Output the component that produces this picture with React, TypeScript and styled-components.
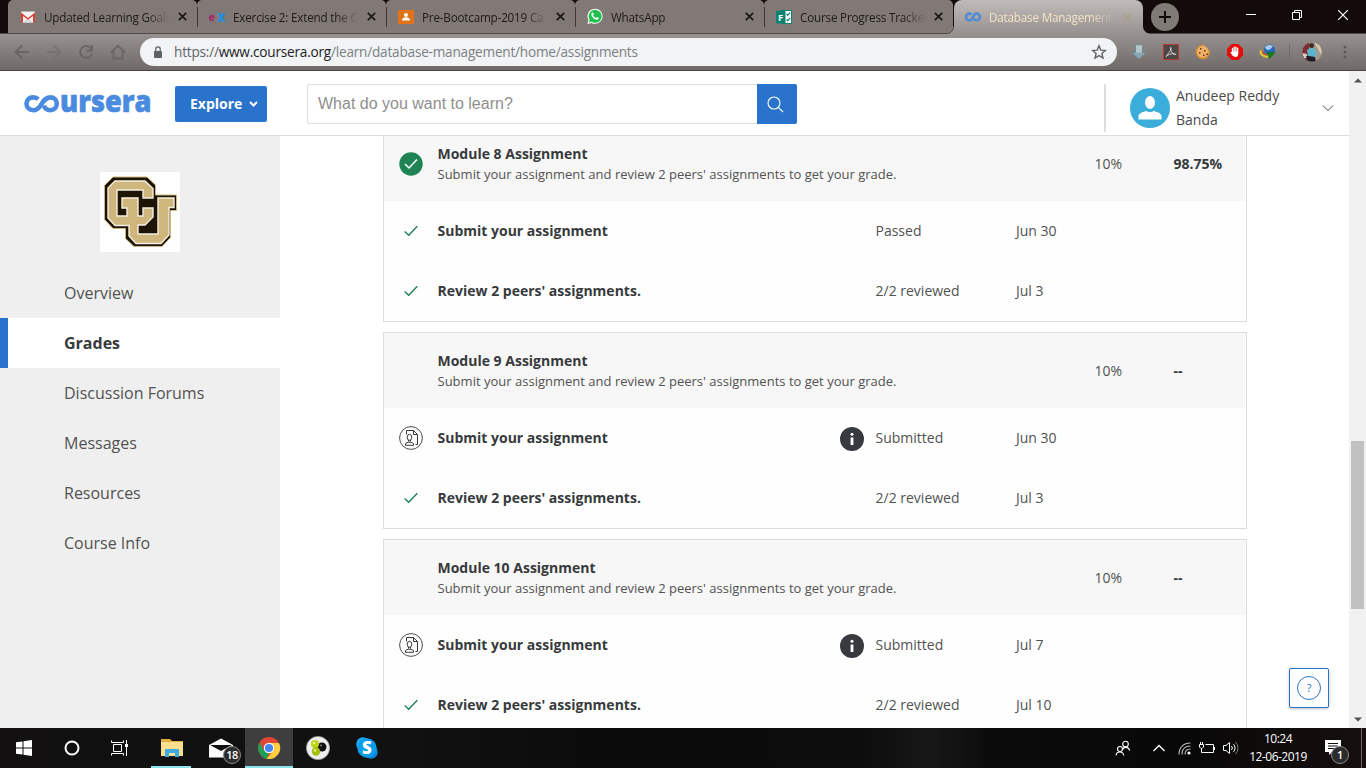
import React from 'react';
import styled, { createGlobalStyle, css } from 'styled-components';

const GlobalStyle = createGlobalStyle`
  * { box-sizing: border-box; }
  html, body { margin: 0; padding: 0; }
  body {
    width: 1366px;
    height: 768px;
    overflow: hidden;
    background: #fff;
    font-family: "Open Sans", "Noto Sans", sans-serif;
    color: #373a3c;
  }
  svg { display: block; flex: none; }
`;

const Screen = styled.div`
  width: 1366px;
  height: 768px;
  display: flex;
  flex-direction: column;
  overflow: hidden;
`;

/* ---------- browser window ---------- */

const TabStrip = styled.div`
  height: 33px;
  flex: none;
  display: flex;
  padding-left: 8px;
  background: #130b0a;
`;

const Tab = styled.div<{ $active?: boolean }>`
  position: relative;
  width: 189px;
  height: 33px;
  flex: none;
  display: flex;
  align-items: center;
  padding: 0 10px 0 12px;
  border-radius: 5px 5px 0 0;
  background: #807975;
  color: #1f1a18;
  &:not(:first-child)::before {
    content: '';
    position: absolute;
    left: 0;
    top: 7px;
    width: 1px;
    height: 20px;
    background: #3f3836;
  }
  ${(p) =>
    p.$active &&
    css`
      height: 34px;
      z-index: 1;
      padding: 0 11px;
      border-radius: 8px 8px 0 0;
      background: linear-gradient(#c0bbb9, #979190);
      color: #f3e3c6;
      margin-left: 1px;
      &:not(:first-child)::before {
        left: -8px;
        top: 26px;
        width: 8px;
        height: 8px;
        background: radial-gradient(circle at 0 0, transparent 7px, #4a4240 7.5px, #979190 8.5px);
      }
      &::after {
        content: '';
        position: absolute;
        right: -8px;
        top: 26px;
        width: 8px;
        height: 8px;
        background: radial-gradient(circle at 8px 0, transparent 7.5px, #979190 8.5px);
      }
    `}
`;

const TabTitle = styled.span`
  width: 126px;
  margin-left: 8px;
  font-size: 11.7px;
  line-height: 16px;
  letter-spacing: -0.2px;
  white-space: nowrap;
  -webkit-mask-image: linear-gradient(90deg, #000 102px, transparent 126px);
  mask-image: linear-gradient(90deg, #000 102px, transparent 126px);
`;

const TabClose = styled.svg`
  margin-left: auto;
`;

const NewTab = styled.div`
  width: 28px;
  height: 28px;
  margin: 3px 0 0 8px;
  border-radius: 50%;
  background: #807a77;
  display: grid;
  place-items: center;
`;

const WindowButtons = styled.div`
  margin-left: auto;
  display: flex;
`;

const WindowButton = styled.div`
  width: 46px;
  height: 29px;
  display: grid;
  place-items: center;
`;

const Toolbar = styled.div`
  height: 38px;
  flex: none;
  display: flex;
  align-items: center;
  padding: 0 13px 0 14px;
  background: linear-gradient(#979190, #6f6a67);
  border-top: 1px solid #4f4846;
  border-bottom: 1px solid #4a4442;
`;

const NavButtons = styled.div`
  width: 126px;
  display: flex;
  gap: 16px;
`;

const Omnibox = styled.div`
  width: 977px;
  height: 28px;
  padding: 0 10px 0 13px;
  display: flex;
  align-items: center;
  border-radius: 14px;
  background: #f1f3f4;
  font-size: 13.6px;
`;

const Url = styled.span`
  flex: 1;
  margin-left: 11px;
  color: #7b8086;
  line-height: 20px;
  letter-spacing: -0.21px;
  white-space: nowrap;
`;
const UrlHost = styled.span`
  color: #202124;
`;
const UrlScheme = styled.span`
  color: #5f6368;
`;

const Extensions = styled.div`
  display: flex;
  align-items: center;
  gap: 16px;
  margin-left: 14px;
`;

const ToolbarRule = styled.div`
  width: 1px;
  height: 16px;
  margin: 0 12px 0 13px;
  background: #716b69;
`;

/* ---------- page ---------- */

const Page = styled.div`
  flex: 1;
  min-height: 0;
  display: flex;
`;

const Document = styled.div`
  width: 1349px;
  display: flex;
  flex-direction: column;
  background: #fff;
  position: relative;
`;

const Scrollbar = styled.div`
  width: 17px;
  background: #f1f1f1;
  display: flex;
  flex-direction: column;
  align-items: center;
  padding: 7px 0 6px;
`;

const ScrollThumb = styled.div`
  width: 13px;
  height: 168px;
  margin: 358px 0 auto;
  background: #c1c1c1;
`;

const Header = styled.header`
  height: 65px;
  flex: none;
  display: flex;
  align-items: center;
  border-bottom: 1px solid #ddd;
  padding-left: 23px;
`;

const Explore = styled.button`
  width: 92px;
  height: 36px;
  margin: 2px 0 0 22px;
  border: 0;
  padding: 0 9px 0 15px;
  display: flex;
  align-items: center;
  justify-content: space-between;
  border-radius: 2px;
  background: #2a73cc;
  color: #fff;
  font: 700 14px/20px "Open Sans", sans-serif;
`;

const Search = styled.div`
  display: flex;
  width: 490px;
  height: 40px;
  margin: 2px 0 0 40px;
`;

const SearchField = styled.div`
  flex: 1;
  padding-left: 10px;
  border: 1px solid #ddd;
  border-right: 0;
  border-radius: 2px 0 0 2px;
  color: #8f8f8f;
  font: 16px/37px "Liberation Sans", sans-serif;
`;

const SearchButton = styled.div`
  width: 40px;
  display: grid;
  place-items: center;
  padding-right: 4px;
  border-radius: 0 2px 2px 0;
  background: #2a73cc;
`;

const Account = styled.div`
  height: 48px;
  margin: 9px 0 0 auto;
  width: 245px;
  padding-left: 24px;
  border-left: 2px solid #ddd;
  display: flex;
  align-items: center;
`;

const AccountName = styled.div`
  width: 120px;
  margin-left: 6px;
  font-size: 14px;
  line-height: 24px;
  color: #4b4b4b;
`;

const Main = styled.div`
  flex: 1;
  min-height: 0;
  display: flex;
`;

const Sidebar = styled.aside`
  width: 280px;
  background: #efefef;
  padding-top: 36px;
`;

const CourseLogo = styled.div`
  width: 80px;
  height: 80px;
  margin: 0 0 16px 100px;
  background: #fff;
`;

const NavItem = styled.a<{ $active?: boolean }>`
  display: block;
  height: 50px;
  padding-left: 56px;
  border-left: 8px solid ${(p) => (p.$active ? '#2a73cc' : 'transparent')};
  background: ${(p) => (p.$active ? '#fff' : 'transparent')};
  color: ${(p) => (p.$active ? '#373a3c' : '#525252')};
  font-size: 16px;
  font-weight: ${(p) => (p.$active ? 700 : 400)};
  line-height: 50px;
`;

const Content = styled.main`
  flex: 1;
  overflow: hidden;
  padding-left: 103px;
`;

const CardList = styled.div`
  width: 864px;
  margin-top: -11px;
  display: flex;
  flex-direction: column;
  gap: 10px;
`;

const Card = styled.section`
  border: 1px solid #ddd;
  background: #fefefe;
`;

const CardRow = styled.div<{ $head?: boolean }>`
  display: grid;
  grid-template-columns: 53.5px 402px 36px 140.5px 78.5px 79px 1fr;
  align-items: center;
  height: ${(p) => (p.$head ? 75 : 60)}px;
  background: ${(p) => (p.$head ? '#f7f7f7' : 'transparent')};
  font-size: 14px;
  line-height: 20px;
  color: #525252;
`;

const IconCell = styled.div`
  display: grid;
  place-items: center;
`;

const InfoCell = styled.div`
  padding-top: 2px;
`;

const Heading = styled.div`
  grid-column: 2 / span 4;
`;

const Strong = styled.div`
  font-weight: 700;
  color: #373a3c;
`;

const Description = styled.div`
  font-size: 13px;
  letter-spacing: 0.01px;
`;

const HelpButton = styled.div`
  position: absolute;
  right: 20px;
  bottom: 20px;
  width: 40px;
  height: 40px;
  display: grid;
  place-items: center;
  border: 1px solid #2a73cc;
  border-radius: 2px;
  background: #fff;
  box-shadow: 0 1px 3px rgba(0, 0, 0, 0.25);
`;

const HelpRing = styled.div`
  width: 24px;
  height: 24px;
  border: 1px solid #2a73cc;
  border-radius: 50%;
  color: #2a73cc;
  text-align: center;
  font-size: 11px;
  line-height: 22px;
`;

/* ---------- taskbar ---------- */

const Taskbar = styled.footer`
  height: 40px;
  flex: none;
  display: flex;
  background: linear-gradient(90deg, #121010 0, #111 400px, #0b0b0b 600px, #0c0c0c 860px, #171817 930px, #0b0b0b 990px, #080808 1180px, #160f0e 1366px);
  color: #fff;
`;

const TaskItem = styled.div<{ $system?: boolean; $open?: boolean; $current?: boolean }>`
  position: relative;
  width: ${(p) => (p.$current || p.$system ? 48 : 49)}px;
  height: 40px;
  margin-left: ${(p) => (p.$open ? 3 : 0)}px;
  display: grid;
  place-items: center;
  background: ${(p) => (p.$current ? '#3f3e3e' : 'transparent')};
  ${(p) =>
    (p.$open || p.$current) &&
    css`
      &::after {
        content: '';
        position: absolute;
        bottom: 0;
        left: ${p.$current ? 0 : 4}px;
        right: ${p.$current ? 0 : 5}px;
        height: 2px;
        background: #8ce3ea;
      }
    `}
`;

const Tray = styled.div`
  margin-left: auto;
  display: flex;
  align-items: center;
`;

const TrayIcon = styled.div<{ $after: number }>`
  margin-right: ${(p) => p.$after}px;
`;

const Clock = styled.div`
  width: 76px;
  text-align: center;
  font-size: 12px;
  line-height: 18px;
  letter-spacing: -0.5px;
`;

const Notifications = styled.div`
  position: relative;
  width: 45px;
  height: 40px;
  padding: 12px 0 0 9px;
`;

const Badge = styled.span<{ $x: number; $y: number }>`
  position: absolute;
  left: ${(p) => p.$x}px;
  top: ${(p) => p.$y}px;
  width: 18px;
  height: 18px;
  border-radius: 50%;
  border: 1px solid #8b8b8b;
  background: #2b2b2b;
  color: #fff;
  font-size: 11px;
  font-weight: 600;
  line-height: 15px;
  text-align: center;
  letter-spacing: -0.5px;
`;

const DesktopEdge = styled.div`
  width: 5px;
  height: 40px;
  border-left: 1px solid #6d6867;
`;

/* ---------- drawings ---------- */

const Gmail = () => (
  <svg width="16" height="16" viewBox="0 0 16 16">
    <rect x="1" y="2.5" width="14" height="11" rx="1" fill="#f2f2f2" />
    <path d="M3 13.5L8 8.5L13 13.5" fill="#dcdcdc" />
    <path d="M1 13.5V3.5L8 9L15 3.5V13.5H13V7L8 10.8L3 7V13.5Z" fill="#d8433a" />
  </svg>
);

const EdX = () => (
  <svg width="16" height="16" viewBox="0 0 16 16">
    <text x="-0.5" y="12" fontSize="10.500" fontWeight="800" fontFamily="Open Sans" fill="#a8286c">e</text>
    <text x="8" y="12.5" fontSize="12" fontWeight="800" fontFamily="Open Sans" fill="#1e8fe0">X</text>
  </svg>
);

const Classroom = () => (
  <svg width="16" height="16" viewBox="0 0 16 16">
    <rect y="1" width="16" height="14" rx="1" fill="#e8711c" />
    <rect x="2" y="3" width="12" height="10" fill="#e07414" />
    <circle cx="8" cy="6" r="2" fill="#fff" />
    <path d="M4 11.5C4 9 6 8.6 8 8.6S12 9 12 11.5Z" fill="#fff" />
  </svg>
);

const WhatsApp = () => (
  <svg width="16" height="17" viewBox="0 0 17 17">
    <path d="M.5 16.5L1.6 12.3A8 8 0 1 1 4.7 15.3Z" fill="#fff" />
    <path d="M2 15L2.8 12A6.9 6.9 0 1 1 5 14.2Z" fill="#1fc04c" />
    <path d="M5.3 4.6C6.3 4 6.7 4.3 7.2 5.9C7.3 6.4 6.4 6.9 6.6 7.2C7.3 8.6 8.4 9.5 9.6 10C10 10.1 10.4 9 10.9 9.1C12.6 9.9 12.7 10 12.2 11C11.4 12.5 9.3 12 7.6 10.8C5.6 9.4 3.6 6.7 5.3 4.6Z" fill="#fff" />
  </svg>
);

const Forms = () => (
  <svg width="16" height="16" viewBox="0 0 16 16">
    <rect x="8" y="1.5" width="7.5" height="13" fill="#fff" stroke="#0b8372" />
    <path d="M0 2L9.5 .5V15.5L0 14Z" fill="#0b8372" />
    <text x="2" y="11.5" fontSize="9.5" fontWeight="700" fontFamily="Open Sans" fill="#fff">F</text>
    <path d="M10.5 5L11.7 6.3L14 3.7M10.5 10.4L11.7 11.7L14 9" stroke="#0b8372" fill="none" strokeWidth="1.2" />
  </svg>
);

const CourseraMark = () => (
  <svg width="16" height="10" viewBox="0 0 16 10">
    <path d="M6.6 2.6C5.8 1.8 5.2 1.5 4.4 1.5A3.4 3.4 0 0 0 4.4 8.4C8 8.4 8 1.5 11.6 1.5A3.4 3.4 0 0 1 11.6 8.4C10 8.4 9.3 7.6 8.6 6.6" fill="none" stroke="#4a8bd8" strokeWidth="2.4" />
  </svg>
);

const LogoSvg = styled.svg`
  margin: -9px 0 -10px;
`;

const CourseraLogo = () => (
  <LogoSvg width="130" height="40" viewBox="0 -10 130 40" role="img" aria-label="coursera">
    <path d="M15.200 5.300C14 4 12.300 3.400 10.200 3.400C6.300 3.400 3.500 6 3.500 9.800S6.300 16.200 10.200 16.200C13.600 16.200 15.800 14.200 17.800 11.200C20.300 7 22.500 3.400 27.300 3.400C31.100 3.400 33.800 6 33.800 9.800S31.100 16.200 27.300 16.200C24 16.200 21.700 14.400 20.900 11.500" fill="none" stroke="#4a8be0" strokeWidth="4.600" />
    <text x="37" y="18.300" fontFamily="Open Sans" fontWeight="800" fontSize="29.500" fill="#4a8be0" stroke="#4a8be0" strokeWidth=".6" textLength="91.500" lengthAdjust="spacingAndGlyphs">ursera</text>
  </LogoSvg>
);

const CULogo = () => (
  <svg width="80" height="80" viewBox="0 0 80 80">
    <path d="M13 5H47L55.500 13V23H76.500V38.500H70.500V65.500L62 74.500H34L25.500 66.500V56.500H13L4.500 47.500V13.500Z" fill="#1d1404" stroke="#cdb77e" strokeWidth="1" />
    <path d="M15 9H45L53 16.500V26H43V18H17V44H27V36H22V26H38V44H43V36H53V45L45 53H38V62H58V36V26H74V35.500H69V63L61 71.500H36L29 64V53.500H15L8 46V16Z" fill="#cfb67c" stroke="#f4efe2" strokeWidth="1.400" />
  </svg>
);

const CheckMark = ({ color = '#1f8354' }: { color?: string }) => (
  <svg width="14" height="12" viewBox="0 0 14 12">
    <path d="M.7 6.500L4.700 10.300L13.300 1.200" fill="none" stroke={color} strokeWidth="1.400" />
  </svg>
);

const PassedIcon = () => (
  <svg width="24" height="24" viewBox="0 0 24 24">
    <circle cx="12" cy="12" r="11.700" fill="#1f8354" />
    <path d="M6 12L10 16L18 7.500" fill="none" stroke="#fff" strokeWidth="1.500" />
  </svg>
);

const PeerIcon = () => (
  <svg width="24" height="24" viewBox="0 0 24 24" fill="none" stroke="#373a3c">
    <circle cx="12" cy="12" r="11.400" strokeWidth="0.900" />
    <path d="M7.500 8.500V4.500H14.500L18.500 8.500V18.500H16.500M14.500 4.500V8.500H18.500" />
    <ellipse cx="10.500" cy="11.300" rx="2.300" ry="3" />
    <path d="M9.500 14V15.500M11.500 14V15.500M6.500 19.300V17.500L9 16.200H12L14.500 17.500V19.300Z" />
  </svg>
);

const InfoIcon = () => (
  <svg width="24" height="24" viewBox="0 0 24 24">
    <circle cx="12" cy="12" r="12" fill="#373a3f" />
    <circle cx="12" cy="7.300" r="1.500" fill="#fff" />
    <path d="M10.600 10.500H13.400V18H10.600Z" fill="#fff" />
  </svg>
);

const Cross = ({ color = '#1b1716' }: { color?: string }) => (
  <TabClose width="9" height="9" viewBox="0 0 9 9">
    <path d="M.8 .8L8.200 8.200M8.200 .8L.8 8.200" stroke={color} strokeWidth="1.700" />
  </TabClose>
);

const tabs = [
  { title: 'Updated Learning Goals', icon: <Gmail /> },
  { title: 'Exercise 2: Extend the C', icon: <EdX /> },
  { title: 'Pre-Bootcamp-2019 Ca', icon: <Classroom /> },
  { title: 'WhatsApp', icon: <WhatsApp /> },
  { title: 'Course Progress Tracker', icon: <Forms /> },
];

const modules = [
  { number: 8, passed: true, grade: '98.75%', submit: 'Passed', submitDate: 'Jun 30', reviewDate: 'Jul 3' },
  { number: 9, passed: false, grade: '--', submit: 'Submitted', submitDate: 'Jun 30', reviewDate: 'Jul 3' },
  { number: 10, passed: false, grade: '--', submit: 'Submitted', submitDate: 'Jul 7', reviewDate: 'Jul 10' },
];

const navigation = ['Overview', 'Grades', 'Discussion Forums', 'Messages', 'Resources', 'Course Info'];

const BrowserChrome = () => (
  <>
    <TabStrip>
      {tabs.map((t) => (
        <Tab key={t.title}>
          {t.icon}
          <TabTitle>{t.title}</TabTitle>
          <Cross />
        </Tab>
      ))}
      <Tab $active>
        <CourseraMark />
        <TabTitle>Database Management</TabTitle>
        <Cross color="#a99f87" />
      </Tab>
      <NewTab>
        <svg width="12" height="12" viewBox="0 0 12 12"><path d="M6 0V12M0 6H12" stroke="#110b0a" strokeWidth="2" /></svg>
      </NewTab>
      <WindowButtons>
        <WindowButton><svg width="10" height="10" viewBox="0 0 10 10"><path d="M0 4.500H10" stroke="#fff" /></svg></WindowButton>
        <WindowButton><svg width="10" height="10" viewBox="0 0 10 10" fill="none" stroke="#fff"><path d="M.5 2.500H7.500V9.500H.5ZM2.500 2.500V.5H9.500V7.500H7.500" /></svg></WindowButton>
        <WindowButton><svg width="10" height="10" viewBox="0 0 10 10"><path d="M0 0L10 10M10 0L0 10" stroke="#fff" strokeWidth="1.200" /></svg></WindowButton>
      </WindowButtons>
    </TabStrip>
    <Toolbar>
      <NavButtons>
        <svg width="16" height="16" viewBox="0 0 16 16" fill="none" stroke="#6a6563" strokeWidth="1.800"><path d="M15 8H2.500M8 1.500L1.500 8L8 14.500" /></svg>
        <svg width="16" height="16" viewBox="0 0 16 16" fill="none" stroke="#787371" strokeWidth="1.800"><path d="M1 8H13.500M8 1.500L14.500 8L8 14.500" /></svg>
        <svg width="16" height="16" viewBox="0 0 16 16" fill="none" stroke="#6a6563" strokeWidth="1.800"><path d="M13.500 5A6 6 0 1 0 14 9.500" /><path d="M14 1V6.500H8.500" /></svg>
        <svg width="16" height="16" viewBox="0 0 16 16" fill="none" stroke="#6a6563" strokeWidth="1.800"><path d="M.8 8.700L8 1.800L15.200 8.700M3.500 7V14.500H12.500V7" /></svg>
      </NavButtons>
      <Omnibox>
        <svg width="10" height="13" viewBox="0 0 10 13"><rect x="1" y="5" width="8" height="7" rx=".8" fill="#5f6368" /><path d="M2.800 5.500V3A2.200 2.200 0 0 1 7.200 3V5.500" fill="none" stroke="#5f6368" strokeWidth="1.300" /></svg>
        <Url><UrlScheme>https://</UrlScheme><UrlHost>www.coursera.org</UrlHost>/learn/database-management/home/assignments</Url>
        <svg width="16" height="16" viewBox="0 0 16 16"><path d="M8 1.800L9.800 6.100L14.400 6.500L10.900 9.500L12 14L8 11.600L4 14L5.100 9.500L1.600 6.500L6.200 6.100Z" fill="none" stroke="#5f6368" strokeWidth="1.400" /></svg>
      </Omnibox>
      <Extensions>
        <svg width="16" height="16" viewBox="0 0 16 16"><path d="M4.500 .8H11.500V8.500H15L8 15.200L1 8.500H4.500Z" fill="#8fa9b3" stroke="#6f8b95" /><path d="M5 1.300H11V8.500H5Z" fill="#b3c6cd" /></svg>
        <svg width="16" height="16" viewBox="0 0 16 16" fill="none"><rect x=".5" y=".5" width="15" height="15" fill="#4d4746" stroke="#b23a2d" /><path d="M3.200 12.500C4.500 9.500 8.500 7 8.200 4C8 3 7 3.300 7.400 4.800C8 8 10 10.300 12.500 10.800C13.300 10.500 12.500 9.500 10.800 9.600C8 9.700 4.500 10.800 3.200 12.500Z" stroke="#ddd" strokeWidth=".9" /></svg>
        <svg width="16" height="16" viewBox="0 0 16 16"><path d="M8 .8A7.200 7.200 0 1 0 15 9L15 7L13.500 6L13 4.500L11.500 3.500L10.500 1.800Z" fill="#dc8c34" /><circle cx="7.800" cy="7.800" r="5.800" fill="#eeb168" /><path d="M5 4H6.500V5.500H5ZM9 6H10.500V7.500H9ZM4 8H5.500V9.500H4ZM8 10.500H9.500V12H8ZM11.500 9.500H13V11H11.500Z" fill="#693611" /></svg>
        <svg width="16" height="16" viewBox="0 0 16 16"><path d="M4.700 0H11.300L16 4.700V11.300L11.300 16H4.700L0 11.300V4.700Z" fill="#e40d0d" /><path d="M5.500 9V4.500M7.200 8V3.200M8.900 8V3.200M10.600 9V4.200M4.200 8.500L6 11" stroke="#fff" strokeWidth="1.300" strokeLinecap="round" /><path d="M5 7.500H11.200V10C11.200 14 6.500 14 5 10Z" fill="#fff" /></svg>
        <svg width="17" height="16" viewBox="0 0 17 16"><circle cx="10.500" cy="6" r="5.500" fill="#2667b8" /><path d="M6 3.500C8 0 12 .5 14 2.300L11 5.500L8 6Z" fill="#a9cde8" /><path d="M2.500 6.500C0 9 4 13.500 9 12.500" fill="none" stroke="#e3cd2f" strokeWidth="2" /><path d="M4 6.500C3 9 5 11 9 10.500" fill="none" stroke="#cf4b3c" strokeWidth="1.500" /><path d="M7 8L16.500 8.500L10 15.500L9.500 12Z" fill="#137d18" /></svg>
      </Extensions>
      <ToolbarRule />
      <svg width="20" height="20" viewBox="0 0 20 20"><defs><clipPath id="me"><circle cx="10" cy="10" r="9.800" /></clipPath></defs><g clipPath="url(#me)"><rect width="20" height="20" fill="#a3988a" /><path d="M0 0H7V20H0Z" fill="#842d31" /><path d="M12 0L20 14V4Z" fill="#d8c9a7" /><path d="M0 11L5 12V16H2Z" fill="#d9cfc9" /><path d="M5 8L8 6L12 6L15.500 12L12 15L6 14Z" fill="#5bb4cc" /><circle cx="9.500" cy="3.500" r="2.500" fill="#452b24" /><path d="M4 14L7 14L13 15L14 20H6Z" fill="#201c2b" /></g></svg>
      <svg width="4" height="14" viewBox="0 0 4 14" style={{ marginLeft: 'auto', marginRight: 6 }}><g fill="#5f5a58"><circle cx="2" cy="2" r="1.500" /><circle cx="2" cy="7" r="1.500" /><circle cx="2" cy="12" r="1.500" /></g></svg>
    </Toolbar>
  </>
);

const ModuleCard = ({ m }: { m: (typeof modules)[number] }) => (
  <Card>
    <CardRow $head>
      <IconCell>{m.passed && <PassedIcon />}</IconCell>
      <Heading>
        <Strong>Module {m.number} Assignment</Strong>
        <Description>Submit your assignment and review 2 peers' assignments to get your grade.</Description>
      </Heading>
      <div>10%</div>
      <Strong>{m.grade}</Strong>
    </CardRow>
    <CardRow>
      <IconCell>{m.passed ? <CheckMark /> : <PeerIcon />}</IconCell>
      <Strong>Submit your assignment</Strong>
      <InfoCell>{!m.passed && <InfoIcon />}</InfoCell>
      <div>{m.submit}</div>
      <div>{m.submitDate}</div>
    </CardRow>
    <CardRow>
      <IconCell><CheckMark /></IconCell>
      <Strong>Review 2 peers' assignments.</Strong>
      <div />
      <div>2/2 reviewed</div>
      <div>{m.reviewDate}</div>
    </CardRow>
  </Card>
);

const DesktopTaskbar = () => (
  <Taskbar>
    <TaskItem $system><svg width="16" height="16" viewBox="0 0 16 16" fill="#fff"><path d="M0 2.300L6.500 1.400V7.500H0ZM7.500 1.200L16 0V7.500H7.500ZM0 8.500H6.500V14.600L0 13.700ZM7.500 8.500H16V16L7.500 14.800Z" /></svg></TaskItem>
    <TaskItem $system><svg width="16" height="16" viewBox="0 0 16 16"><circle cx="8" cy="8" r="6.500" fill="none" stroke="#fff" strokeWidth="2" /></svg></TaskItem>
    <TaskItem $system><svg width="18" height="16" viewBox="0 0 18 16" fill="none" stroke="#fff"><path d="M2.500 4.500H10.500V11.500H2.500ZM.5 .5V2.500H12.500V.5M.5 15.500V13.500H12.500V15.500M15.500 0V16" /><rect x="14" y="4" width="3" height="3" fill="#fff" stroke="none" /></svg></TaskItem>
    <TaskItem $open><svg width="22" height="20" viewBox="0 0 22 20"><path d="M0 1H9L11 3H22V18H0Z" fill="#e3ae42" /><path d="M0 4H22V18H0Z" fill="#fbdf8c" /><path d="M4 11H18V19H14V15H8V19H4Z" fill="#3fabe0" /></svg></TaskItem>
    <TaskItem><svg width="24" height="20" viewBox="0 0 24 20"><path d="M0 7L12 .5L24 7V19.500H0Z" fill="#fff" /><path d="M1 7H23L12 13Z" fill="#111" /></svg><Badge $x={27} $y={18}>18</Badge></TaskItem>
    <TaskItem $current>
      <svg width="24" height="24" viewBox="0 0 24 24"><circle cx="12" cy="12" r="11" fill="#df4636" /><path d="M2.500 6.500L7.200 14.700L12 17.500L9.500 22.700A11 11 0 0 1 2.500 6.500Z" fill="#1c9f58" /><path d="M12 7H21.900A11 11 0 0 1 9.500 22.700L16.500 14.500Z" fill="#fdcf40" /><circle cx="12" cy="12" r="5.200" fill="#fff" /><circle cx="12" cy="12" r="4.100" fill="#4385f4" /></svg>
    </TaskItem>
    <TaskItem><svg width="24" height="24" viewBox="0 0 24 24"><circle cx="12" cy="12" r="11.600" fill="#eee" stroke="#999" strokeWidth=".8" /><circle cx="16" cy="11" r="4.500" fill="#111" /><circle cx="9" cy="8" r="4" fill="#b8d414" /><circle cx="10" cy="15.500" r="4.200" fill="#a2bf0c" /><circle cx="8" cy="7" r="1.300" fill="#ebf48a" /><circle cx="9" cy="14.500" r="1.300" fill="#ebf48a" /><circle cx="15" cy="9.500" r="1" fill="#888" /></svg></TaskItem>
    <TaskItem><svg width="22" height="22" viewBox="0 0 22 22"><circle cx="7" cy="7" r="6.800" fill="#1aaaf0" /><circle cx="15" cy="15" r="6.800" fill="#0b84d8" /><circle cx="11" cy="11" r="9.700" fill="#0d9ce8" /><text x="11" y="17" textAnchor="middle" fontFamily="Open Sans" fontWeight="800" fontSize="17" fill="#fff">S</text></svg></TaskItem>
    <Tray>
      <TrayIcon $after={22}><svg width="16" height="16" viewBox="0 0 16 16" fill="none" stroke="#fff" strokeWidth="1.100"><circle cx="10.500" cy="4" r="2.800" /><path d="M7.500 9.500C9 6.500 13.500 6.500 14.700 10.500" /><circle cx="5" cy="9" r="2.500" /><path d="M1 15.500C1.500 10.800 8 10.800 8.800 15.500" /></svg></TrayIcon>
      <TrayIcon $after={13}><svg width="12" height="8" viewBox="0 0 12 8"><path d="M.5 7L6 1.500L11.500 7" fill="none" stroke="#fff" strokeWidth="1.300" /></svg></TrayIcon>
      <TrayIcon $after={8}><svg width="13" height="13" viewBox="0 0 13 13" fill="none" stroke="#bbb" strokeWidth="1.100"><path d="M1 12.500C1 5.500 5.500 1 12.500 1M4 12.500C4 7 7 4 12.500 4M7 12.500C7 9 9 7 12.500 7" /><circle cx="11" cy="11" r="1.600" fill="#fff" stroke="none" /></svg></TrayIcon>
      <TrayIcon $after={8}><svg width="16" height="12" viewBox="0 0 16 12" fill="none" stroke="#fff"><path d="M4.500 10.500H14.500V2.500H6.500M15.500 5V8M1.500 0V2M3.500 0V2M.5 2.500H4.500V5L3 6.500H2L.5 5ZM2.500 6.500V10.500H4.500" /></svg></TrayIcon>
      <TrayIcon $after={1}><svg width="16" height="14" viewBox="0 0 16 14" fill="none" stroke="#fff"><path d="M.5 4.500H3L6.500 1.500V12.500L3 9.500H.5ZM8.500 5A3 3 0 0 1 8.500 9M10.500 3.200A5.500 5.500 0 0 1 10.500 10.800" /><path d="M12.500 1A8.500 8.500 0 0 1 12.500 13" stroke="#777" /></svg></TrayIcon>
      <Clock>10:24<br />12-06-2019</Clock>
      <Notifications>
        <svg width="16" height="16" viewBox="0 0 16 16"><path d="M0 0H16V12H7L4 15V12H0Z" fill="#fff" /><path d="M3 3.500H13M3 6H13M3 8.500H10" stroke="#111" /></svg>
        <Badge $x={15} $y={18}>1</Badge>
      </Notifications>
      <DesktopEdge />
    </Tray>
  </Taskbar>
);

export default function App() {
  return (
    <Screen>
      <GlobalStyle />
      <BrowserChrome />
      <Page>
        <Document>
          <Header>
            <CourseraLogo />
            <Explore>Explore<svg width="9" height="6" viewBox="0 0 9 6"><path d="M1 1L4.500 4.500L8 1" fill="none" stroke="#fff" strokeWidth="2" /></svg></Explore>
            <Search>
              <SearchField>What do you want to learn?</SearchField>
              <SearchButton><svg width="17" height="17" viewBox="0 0 17 17" fill="none" stroke="#fff" strokeWidth="1.100"><circle cx="7" cy="7" r="6" /><path d="M11.300 11.300L16 16" /></svg></SearchButton>
            </Search>
            <Account>
              <svg width="40" height="40" viewBox="0 0 40 40"><circle cx="20" cy="20" r="20" fill="#3badda" /><ellipse cx="20" cy="14.500" rx="5" ry="6.500" fill="#fff" /><path d="M8.500 31.500V28C8.500 25 13 24.300 16 23C18.500 24.500 21.500 24.500 24 23C27 24.300 31.500 25 31.500 28V31.500Z" fill="#fff" /></svg>
              <AccountName>Anudeep Reddy Banda</AccountName>
              <svg width="12" height="8" viewBox="0 0 12 8" style={{ marginLeft: 26 }}><path d="M.8 1.500L6 6.500L11.200 1.500" fill="none" stroke="#555" /></svg>
            </Account>
          </Header>
          <Main>
            <Sidebar>
              <CourseLogo><CULogo /></CourseLogo>
              {navigation.map((n) => <NavItem key={n} $active={n === 'Grades'}>{n}</NavItem>)}
            </Sidebar>
            <Content>
              <CardList>{modules.map((m) => <ModuleCard key={m.number} m={m} />)}</CardList>
            </Content>
          </Main>
          <HelpButton><HelpRing>?</HelpRing></HelpButton>
        </Document>
        <Scrollbar>
          <svg width="8" height="5" viewBox="0 0 8 5"><path d="M0 4.500L4 .5L8 4.500Z" fill="#505050" /></svg>
          <ScrollThumb />
          <svg width="8" height="5" viewBox="0 0 8 5"><path d="M0 .5L4 4.500L8 .5Z" fill="#505050" /></svg>
        </Scrollbar>
      </Page>
      <DesktopTaskbar />
    </Screen>
  );
}
